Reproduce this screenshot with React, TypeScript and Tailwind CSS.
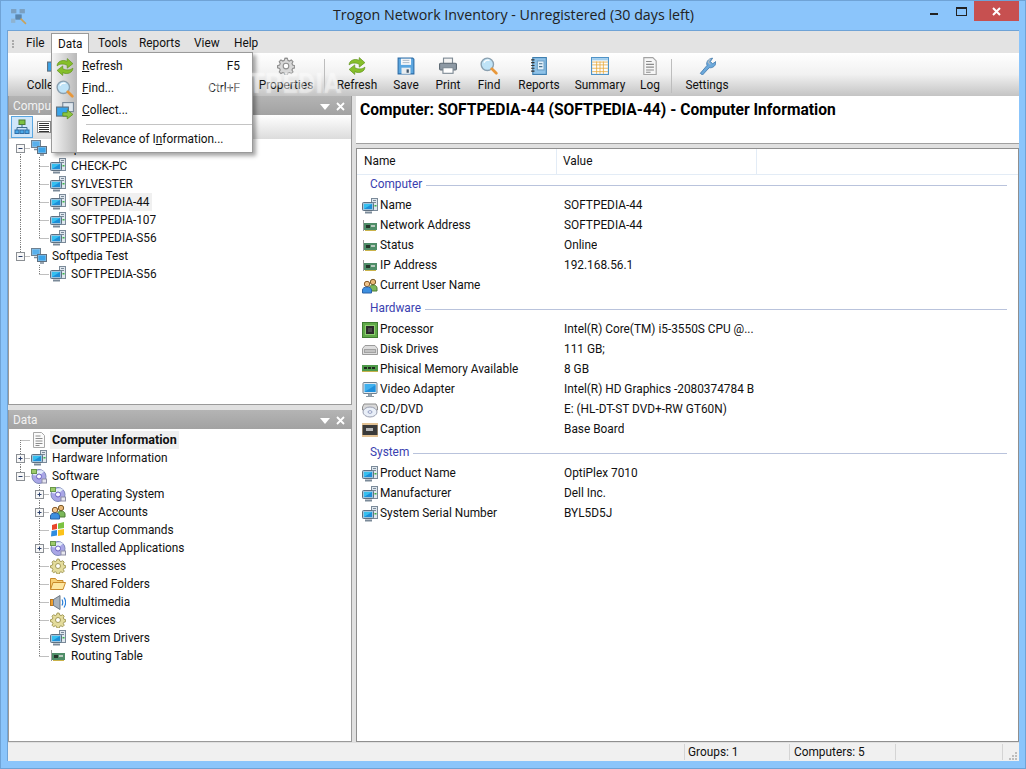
import type { ReactNode } from 'react'

const Svg = ({ size = 16, children }: { size?: number; children: ReactNode }) => (
  <svg width={size} height={size} viewBox="0 0 16 16" className="shrink-0">
    {children}
  </svg>
)

const Computer = () => (
  <Svg>
    <rect x="9.500" y="0.500" width="6" height="12" fill="#dfe7ee" stroke="#7b8a99" />
    <path d="M11 2.500h3M11 4.500h3" stroke="#7b8a99" />
    <rect x="12.500" y="7" width="2" height="1.500" fill="#39b54a" />
    <rect x="0.500" y="4.500" width="11" height="8" rx="1" fill="#9fc4de" stroke="#5f7080" />
    <rect x="2" y="6" width="8" height="5" fill="#35c0f0" />
    <path d="M2 11l8-5v5z" fill="#1d8fd8" />
    <path d="M3 14.500h7" stroke="#7b8a99" strokeWidth="2" />
  </Svg>
)

const Group = () => (
  <Svg>
    <rect x="0.500" y="0.500" width="9" height="7" fill="#9cc6e6" stroke="#6f8191" />
    <rect x="1.500" y="1.500" width="7" height="5" fill="#58b0ec" />
    <path d="M3 9.500h4" stroke="#7b8a99" strokeWidth="1.500" />
    <rect x="6.500" y="6.500" width="9" height="7" fill="#9cc6e6" stroke="#5f7080" />
    <rect x="7.500" y="7.500" width="7" height="5" fill="#3aa4ea" />
    <path d="M9 15h4" stroke="#7b8a99" strokeWidth="1.500" />
  </Svg>
)

const Doc = () => (
  <Svg>
    <path d="M2.500 0.500h8l3 3v12h-11z" fill="#fbfbfb" stroke="#a8a8a8" />
    <path d="M4.500 4h5M4.500 6.500h7M4.500 9h7M4.500 11.500h7M4.500 13.500h4" stroke="#8c8c8c" />
  </Svg>
)

const Disc = () => (
  <Svg>
    <circle cx="8" cy="8.500" r="7" fill="#a9a6e6" stroke="#7c88b8" />
    <path d="M1.500 7C4 2 10 1 13 3.500L8 8z" fill="#e3ecfa" />
    <circle cx="8" cy="8.500" r="2.500" fill="#f4f4ff" stroke="#6a60c0" />
    <rect x="0.500" y="1.500" width="5" height="4" fill="#9ccb6a" stroke="#68964a" />
    <rect x="11" y="11" width="4.500" height="4" fill="#e7e7ef" stroke="#8d8da6" />
  </Svg>
)

const Users = () => (
  <Svg>
    <circle cx="11" cy="4" r="2.700" fill="#e8b878" stroke="#7a5a2a" />
    <path d="M7.500 13v-3c0-2 1.500-3 3.500-3s4 1 4 3v3z" fill="#7cb85a" stroke="#4d7d35" />
    <circle cx="5" cy="6" r="2.700" fill="#f0c58c" stroke="#8a5a2a" />
    <path d="M0.500 15v-3c0-2 2-3 4.500-3s4.500 1 4.500 3v3z" fill="#3d8fe0" stroke="#2a62a8" />
  </Svg>
)

const Flag = () => (
  <Svg>
    <path d="M2 3l5-1.500V7l-5 1z" fill="#e8462a" />
    <path d="M8 1.500L14 0v6L8 7z" fill="#7cc242" />
    <path d="M1.500 9l5.500-1v5.500l-6 1z" fill="#2f8de0" />
    <path d="M8 8l6-1v6l-6 1z" fill="#fbc21a" />
  </Svg>
)

const Gear = ({ color = '#e4dc9c', line = '#a39a58', size = 16 }: { color?: string; line?: string; size?: number }) => (
  <Svg size={size}>
    <path
      d="M8 1.500l1.200 0.200 0.500 1.800 1.300 0.600 1.700-0.900 1.500 1.500-0.900 1.700 0.600 1.300 1.800 0.500v2l-1.800 0.500-0.600 1.300 0.900 1.700-1.500 1.500-1.700-0.900-1.300 0.500-0.500 1.800H7l-0.500-1.800-1.300-0.500-1.700 0.900-1.500-1.500 0.900-1.700-0.600-1.300-1.800-0.500v-2l1.800-0.500 0.600-1.300-0.900-1.700 1.500-1.500 1.700 0.900 1.300-0.600L7 1.700z"
      fill={color}
      stroke={line}
      transform="translate(0 -0.500)"
    />
    <circle cx="8" cy="8" r="2.500" fill="#fff" stroke={line} />
  </Svg>
)

const Folder = () => (
  <Svg>
    <path d="M0.500 13.500v-11h5l1.500 2h6v2" fill="#f6cf73" stroke="#c98a2a" />
    <path d="M0.500 13.500l2.500-7h12.500l-2.500 7z" fill="#fde6a0" stroke="#c98a2a" />
  </Svg>
)

const Speaker = () => (
  <Svg>
    <rect x="0.500" y="5.500" width="3" height="6" fill="#f0a030" stroke="#b87820" />
    <path d="M3.500 5.500L10 1.500v14L3.500 11.500z" fill="#aab4be" stroke="#6d7884" />
    <path d="M12 5.500c1 2 1 4 0 6M14 3.500c2 3 2 7 0 10" fill="none" stroke="#2b7fd8" strokeWidth="1.200" />
  </Svg>
)

const Nic = () => (
  <Svg>
    <path d="M1.500 2v11" stroke="#9a9a9a" />
    <rect x="2" y="5" width="13" height="7" fill="#4f8d68" />
    <rect x="4" y="7" width="4" height="3" fill="#23352a" />
    <rect x="9" y="7" width="4" height="2" fill="#b6c9bd" />
    <path d="M3 12.500h11" stroke="#c9b24a" />
  </Svg>
)

const Chip = () => (
  <Svg>
    <rect x="0.500" y="0.500" width="15" height="15" fill="#5fa948" stroke="#3e7d30" />
    <rect x="3.500" y="3.500" width="9" height="9" fill="#2b2b2b" stroke="#8fcf72" />
    <rect x="6" y="6" width="4" height="4" fill="#4a4a4a" />
  </Svg>
)

const DiskDrive = () => (
  <Svg>
    <path d="M3 3.500h10l2.500 3v6h-15v-6z" fill="#dcdcdc" stroke="#9b9b9b" />
    <rect x="2.500" y="7.500" width="11" height="3" fill="#c2c2c2" stroke="#a2a2a2" />
  </Svg>
)

const Ram = () => (
  <Svg>
    <rect x="0" y="3" width="16" height="6" fill="#4f9a4a" />
    <path d="M2 5h3v2H2zM6 5h3v2H6zM10 5h3v2h-3z" fill="#1e2a1e" />
    <path d="M0 9.500h16" stroke="#c5b24c" />
  </Svg>
)

const Monitor = () => (
  <Svg>
    <rect x="1" y="0.500" width="14" height="11" rx="1" fill="#dce6ee" stroke="#6d7f8f" />
    <rect x="2.500" y="2" width="11" height="8" fill="#3fb0ee" />
    <path d="M2.500 10L13.500 3v7z" fill="#1f90dc" />
    <path d="M6.500 12h3v2h-3zM4 14.500h8" fill="#a9b6c1" stroke="#8a98a4" />
  </Svg>
)

const Cd = () => (
  <Svg>
    <path d="M2 2h12l1.500 3v3h-15V5z" fill="#d9d9d9" stroke="#8e8e8e" />
    <ellipse cx="8" cy="10" rx="7" ry="5" fill="#e9eff8" stroke="#9a9fb0" />
    <ellipse cx="8" cy="10" rx="2" ry="1.300" fill="#fff" stroke="#8f9ac0" />
  </Svg>
)

const Caption = () => (
  <Svg>
    <path d="M1 1v14M3 1v14M5 1v14M7 1v14M9 1v14M11 1v14M13 1v14M15 1v14" stroke="#c8862a" />
    <rect x="0.500" y="3" width="15" height="10" fill="#3a3a3a" />
    <rect x="4" y="6" width="7" height="3" fill="#b9b9b9" />
  </Svg>
)

const Refresh = ({ size = 16 }: { size?: number }) => (
  <Svg size={size}>
    <path d="M1 7c0-4 5-6 9-4V0.500l5 4.500-5 4V6.500C7 5 3.500 5 1 7z" fill="#86bf2a" stroke="#5d8f18" strokeWidth="0.600" />
    <path d="M15 9c0 4-5 6-9 4v2.500L1 11l5-4v2.500C9 11 12.500 11 15 9z" fill="#86bf2a" stroke="#5d8f18" strokeWidth="0.600" />
  </Svg>
)

const Find = ({ size = 16 }: { size?: number }) => (
  <Svg size={size}>
    <circle cx="6.500" cy="6.500" r="5.500" fill="#bfe3f7" stroke="#8aa0b0" strokeWidth="1.200" />
    <path d="M3.500 5c1-2 3-2.500 5-2" stroke="#fff" fill="none" />
    <path d="M10.500 10.500l4 4" stroke="#e8973a" strokeWidth="2.400" strokeLinecap="round" />
  </Svg>
)

const Collect = ({ size = 16 }: { size?: number }) => (
  <Svg size={size}>
    <rect x="6" y="0.500" width="9.500" height="8" fill="#dfe7ee" stroke="#7b8a99" />
    <rect x="0.500" y="4.500" width="10.500" height="8" fill="#3aa4ea" stroke="#5f7080" />
    <path d="M6 9.500h4V7l5 4-5 4v-2.500H6z" fill="#8cc63f" stroke="#5d8f18" strokeWidth="0.700" />
  </Svg>
)

const Save = () => (
  <Svg size={18}>
    <path d="M1 1h13l1 1v13H1z" fill="#5aa6e0" stroke="#2f6ea8" />
    <rect x="3.500" y="1.500" width="9" height="5.500" fill="#f6f8fa" />
    <path d="M5 3h6M5 5h6" stroke="#9aaab8" strokeWidth="0.700" />
    <rect x="4" y="9.500" width="8" height="5.500" fill="#e9edf0" />
    <rect x="8.500" y="11" width="2" height="3" fill="#40566a" />
  </Svg>
)

const Print = () => (
  <Svg size={18}>
    <rect x="4" y="1" width="8" height="5" fill="#f3f3f3" stroke="#7e8a94" />
    <rect x="0.500" y="5.500" width="15" height="6" rx="1" fill="#8d99a4" stroke="#5f6b75" />
    <rect x="3.500" y="9.500" width="9" height="5" fill="#fff" stroke="#7e8a94" />
  </Svg>
)

const Reports = () => (
  <Svg size={18}>
    <rect x="2.500" y="0.500" width="12" height="15" fill="#8ec2e8" stroke="#3f7fb0" />
    <path d="M1 2.500h3M1 5h3M1 7.500h3M1 10h3M1 12.500h3" stroke="#333" />
    <rect x="6.500" y="3.500" width="6" height="8" fill="#e4f1fa" stroke="#6ea2c8" />
    <path d="M8 6h3M8 8.500h3" stroke="#44708f" />
  </Svg>
)

const Summary = () => (
  <Svg size={18}>
    <rect x="0.500" y="0.500" width="15" height="15" fill="#fdfdfd" stroke="#4f93c8" />
    <path d="M1 4.500h14M1 7h14M1 10h14M1 13h14M5 4v11M8 4v11M11 4v11" stroke="#e8a83a" strokeWidth="0.700" />
    <rect x="1" y="1" width="14" height="2" fill="#9fcdee" />
  </Svg>
)

const LogIcon = () => (
  <Svg size={18}>
    <path d="M2.500 0.500h8l3 3v12h-11z" fill="#f6f6f6" stroke="#a3a3a3" />
    <path d="M4.500 4h5M4.500 6.500h7M4.500 9h7M4.500 11.500h7M4.500 13.500h4" stroke="#8a8a8a" />
  </Svg>
)

const Wrench = () => (
  <Svg size={18}>
    <path d="M2 14.500l6-7c-1-3 1-6 5-6.500l-2 3 2 2 3-2c0 4-3 6-6 5.500l-6 6.500z" fill="#6ca9dc" stroke="#3e76a8" strokeWidth="0.700" />
    <path d="M11 1.500l-2 3 2 2" fill="none" stroke="#b5bdc4" />
  </Svg>
)

const TreeToggle = () => (
  <Svg>
    <rect x="5" y="1" width="6" height="4.500" fill="#7cc242" stroke="#4d7d35" />
    <path d="M8 5.500V9M3 11V8.500h10V11" fill="none" stroke="#3d6d8f" />
    <rect x="1" y="11" width="4" height="3.500" fill="#4aa8e8" stroke="#2f6ea8" />
    <rect x="6" y="11" width="4" height="3.500" fill="#4aa8e8" stroke="#2f6ea8" />
    <rect x="11" y="11" width="4" height="3.500" fill="#4aa8e8" stroke="#2f6ea8" />
  </Svg>
)

const ListToggle = () => (
  <Svg>
    <rect x="1.500" y="2.500" width="13" height="11" fill="#fff" stroke="#8a8a8a" />
    <path d="M3 4.500h10M3 6.500h10M3 8.500h10M3 10.500h10M3 12.500h10" stroke="#333" />
  </Svg>
)

// one 19px column of tree lines, with the +/- box when the node has children
function TreeCell({ up, down, right, box }: { up?: boolean; down?: boolean; right?: boolean; box?: 'plus' | 'minus' }) {
  return (
    <svg width="19" height="18" viewBox="0 0 19 18" className="shrink-0">
      {up && <path d="M9.500 0V9" stroke="#7f7f7f" strokeDasharray="1 1" />}
      {down && <path d="M9.500 9V18" stroke="#7f7f7f" strokeDasharray="1 1" />}
      {right && <path d="M9.500 9.500H19" stroke="#7f7f7f" strokeDasharray="1 1" />}
      {box && (
        <>
          <rect x="5.500" y="5.500" width="8" height="8" fill="#f7f7f7" stroke="#8b8f94" />
          <path d="M7.500 9.500h4" stroke="#2a3f6a" />
          {box === 'plus' && <path d="M9.500 7.500v4" stroke="#2a3f6a" />}
        </>
      )}
    </svg>
  )
}

interface TreeNode {
  cells: { up?: boolean; down?: boolean; right?: boolean; box?: 'plus' | 'minus' }[]
  icon: ReactNode
  label: string
  bold?: boolean
  selected?: boolean
}

const V = { up: true, down: true }
const MID = { up: true, down: true, right: true }
const END = { up: true, right: true }

const computerTree: TreeNode[] = [
  { cells: [{ down: true, right: true, box: 'minus' }], icon: <Group />, label: 'Softpedia' },
  { cells: [V, MID], icon: <Computer />, label: 'CHECK-PC' },
  { cells: [V, MID], icon: <Computer />, label: 'SYLVESTER' },
  { cells: [V, MID], icon: <Computer />, label: 'SOFTPEDIA-44', selected: true },
  { cells: [V, MID], icon: <Computer />, label: 'SOFTPEDIA-107' },
  { cells: [V, END], icon: <Computer />, label: 'SOFTPEDIA-S56' },
  { cells: [{ up: true, right: true, box: 'minus' }], icon: <Group />, label: 'Softpedia Test' },
  { cells: [{}, END], icon: <Computer />, label: 'SOFTPEDIA-S56' },
]

const dataTree: TreeNode[] = [
  { cells: [{ down: true, right: true }], icon: <Doc />, label: 'Computer Information', bold: true, selected: true },
  { cells: [{ up: true, down: true, right: true, box: 'plus' }], icon: <Computer />, label: 'Hardware Information' },
  { cells: [{ up: true, right: true, box: 'minus' }], icon: <Disc />, label: 'Software' },
  { cells: [{}, { ...MID, box: 'plus' }], icon: <Disc />, label: 'Operating System' },
  { cells: [{}, { ...MID, box: 'plus' }], icon: <Users />, label: 'User Accounts' },
  { cells: [{}, MID], icon: <Flag />, label: 'Startup Commands' },
  { cells: [{}, { ...MID, box: 'plus' }], icon: <Disc />, label: 'Installed Applications' },
  { cells: [{}, MID], icon: <Gear />, label: 'Processes' },
  { cells: [{}, MID], icon: <Folder />, label: 'Shared Folders' },
  { cells: [{}, MID], icon: <Speaker />, label: 'Multimedia' },
  { cells: [{}, MID], icon: <Gear />, label: 'Services' },
  { cells: [{}, MID], icon: <Computer />, label: 'System Drivers' },
  { cells: [{}, END], icon: <Nic />, label: 'Routing Table' },
]

function Tree({ nodes, className }: { nodes: TreeNode[]; className: string }) {
  return (
    <div className={`pl-[2px] ${className}`}>
      {nodes.map((n, i) => (
        <div key={i} className="flex h-[18px] items-center">
          {n.cells.map((c, j) => (
            <TreeCell key={j} {...c} />
          ))}
          <span className="ml-px mr-[3px]">{n.icon}</span>
          <span className={`px-[2px] h-[18px] leading-[18px] ${n.selected ? 'bg-[#f0f0f0]' : ''} ${n.bold ? 'text-[12.5px] font-bold' : ''}`}>
            {n.label}
          </span>
        </div>
      ))}
    </div>
  )
}

function PanelHeader({ title }: { title: string }) {
  return (
    <div className="flex h-[19px] shrink-0 items-center justify-between bg-gradient-to-b from-[#b4b4b4] to-[#a2a2a2] pl-[4px] pr-[6px] pt-[2px] text-[#f2f2f2]">
      <span>{title}</span>
      <div className="flex items-center gap-[6px]">
        <svg width="10" height="6" viewBox="0 0 10 6">
          <path d="M0 0h10L5 6z" fill="#fff" />
        </svg>
        <svg width="9" height="9" viewBox="0 0 9 9">
          <path d="M1 1l7 7M8 1L1 8" stroke="#fff" strokeWidth="1.800" />
        </svg>
      </div>
    </div>
  )
}

function ToolButton({ width, icon, label }: { width: string; icon: ReactNode; label: string }) {
  return (
    <div className={`flex shrink-0 flex-col items-center ${width}`}>
      <div className="flex h-[22px] items-center">{icon}</div>
      <span className="mt-[1px] whitespace-nowrap leading-[15px]">{label}</span>
    </div>
  )
}

const ToolSep = () => <div className="mx-[8px] mt-[4px] h-[34px] w-px shrink-0 bg-[#bdbdbd]" />

interface InfoRow {
  icon: ReactNode
  name: string
  value?: string
}

const sections: { title: string; rows: InfoRow[] }[] = [
  {
    title: 'Computer',
    rows: [
      { icon: <Computer />, name: 'Name', value: 'SOFTPEDIA-44' },
      { icon: <Nic />, name: 'Network Address', value: 'SOFTPEDIA-44' },
      { icon: <Nic />, name: 'Status', value: 'Online' },
      { icon: <Nic />, name: 'IP Address', value: '192.168.56.1' },
      { icon: <Users />, name: 'Current User Name' },
    ],
  },
  {
    title: 'Hardware',
    rows: [
      { icon: <Chip />, name: 'Processor', value: 'Intel(R) Core(TM) i5-3550S CPU @...' },
      { icon: <DiskDrive />, name: 'Disk Drives', value: '111 GB;' },
      { icon: <Ram />, name: 'Phisical Memory Available', value: '8 GB' },
      { icon: <Monitor />, name: 'Video Adapter', value: 'Intel(R) HD Graphics -2080374784 B' },
      { icon: <Cd />, name: 'CD/DVD', value: 'E: (HL-DT-ST DVD+-RW GT60N)' },
      { icon: <Caption />, name: 'Caption', value: 'Base Board' },
    ],
  },
  {
    title: 'System',
    rows: [
      { icon: <Computer />, name: 'Product Name', value: 'OptiPlex 7010' },
      { icon: <Computer />, name: 'Manufacturer', value: 'Dell Inc.' },
      { icon: <Computer />, name: 'System Serial Number', value: 'BYL5D5J' },
    ],
  },
]

function MenuItem({ icon, children, shortcut }: { icon: ReactNode; children: ReactNode; shortcut?: string }) {
  return (
    <div className="flex h-[22px] items-center">
      <div className="flex w-[25px] shrink-0 justify-center">{icon}</div>
      <div className="ml-[5px] flex-1">{children}</div>
      {shortcut && <span className="mr-[12px]">{shortcut}</span>}
    </div>
  )
}

export default function App() {
  return (
    <div
      className="relative flex h-[769px] w-[1026px] flex-col overflow-hidden border border-[#6fa3d6] bg-[#8bc5fb] text-[11.85px] text-[#111]"
      style={{ fontFamily: 'Roboto, "Liberation Sans", sans-serif' }}
    >
      {/* Title bar */}
      <div className="flex h-[29px] shrink-0 items-start">
        <div className="ml-[9px] mt-[7px]">
          <svg width="17" height="17" viewBox="0 0 16 16">
            <rect x="1" y="1" width="5" height="4" fill="#7a9fc0" />
            <rect x="9" y="1" width="5" height="4" fill="#7a9fc0" />
            <rect x="5" y="6" width="6" height="5" fill="#5a86ad" />
            <rect x="1" y="10" width="4" height="4" fill="#8fb3d0" />
            <path d="M10 10l5 5" stroke="#c9a25a" strokeWidth="1.500" />
          </svg>
        </div>
        <div className="mt-[4px] flex-1 pl-[83px] pr-[13px] text-center text-[14.25px] leading-[20px] text-[#222]" style={{ fontFamily: '"Open Sans", sans-serif' }}>
          Trogon Network Inventory - Unregistered (30 days left)
        </div>
        <div className="flex items-start">
          <div className="mt-[12px] mr-[18px] h-[2px] w-[8px] bg-[#222]" />
          <div className="mt-[6px] mr-[7px] h-[9px] w-[11px] border border-t-2 border-[#222]" />
          <div className="flex h-[20px] w-[45px] items-center justify-center bg-[#c75050]">
            <svg width="9" height="9" viewBox="0 0 9 9">
              <path d="M1 1l7 7M8 1L1 8" stroke="#fff" strokeWidth="2" />
            </svg>
          </div>
          <div className="w-[6px]" />
        </div>
      </div>

      {/* Client area */}
      <div className="mx-[6px] mb-[7px] flex min-h-0 flex-1 flex-col border-l border-t border-[#6fa3d6] bg-[#e0e0e0]">
        {/* Menu bar */}
        <div className="flex h-[22px] shrink-0 items-center bg-[#e3e3e3] pl-[4px] pt-[4px]">
          <div className="mr-[6px] flex flex-col gap-[1px]">
            <div className="h-[2px] w-[2px] bg-[#aaa]" />
            <div className="h-[2px] w-[2px] bg-[#aaa]" />
            <div className="h-[2px] w-[2px] bg-[#aaa]" />
          </div>
          <span className="w-[33px] pl-[6px]">File</span>
          <span className="w-[38px] pl-[7px]">Data</span>
          <span className="w-[41px] pl-[7px]">Tools</span>
          <span className="w-[55px] pl-[7px]">Reports</span>
          <span className="w-[40px] pl-[7px]">View</span>
          <span className="pl-[7px]">Help</span>
        </div>

        {/* Toolbar */}
        <div className="flex h-[43px] shrink-0 bg-gradient-to-b from-[#ffffff] via-[#f1f1f1] to-[#c4c4c4] pt-[2px]">
          <ToolButton width="w-[64px] ml-[5px]" icon={<span className="ml-[22px] flex"><Collect size={18} /></span>} label="Collect" />
          <div className="w-[179px] shrink-0" />
          <ToolButton width="w-[60px]" icon={<Gear color="#d8d8d8" line="#8f8f8f" size={18} />} label="Properties" />
          <ToolSep />
          <ToolButton width="w-[48px]" icon={<Refresh size={18} />} label="Refresh" />
          <ToolButton width="w-[50px]" icon={<Save />} label="Save" />
          <ToolButton width="w-[34px]" icon={<Print />} label="Print" />
          <ToolButton width="w-[48px]" icon={<Find size={18} />} label="Find" />
          <ToolButton width="w-[52px]" icon={<Reports />} label="Reports" />
          <ToolButton width="w-[70px]" icon={<Summary />} label="Summary" />
          <ToolButton width="w-[30px] -mr-[2px]" icon={<LogIcon />} label="Log" />
          <ToolSep />
          <ToolButton width="w-[54px]" icon={<Wrench />} label="Settings" />
        </div>

        {/* Panels */}
        <div className="relative flex min-h-0 flex-1 gap-[4px] pb-[18px]">
          <div className="flex w-[344px] shrink-0 flex-col gap-[5px] pb-[1px]">
            <div className="flex h-[309px] flex-col border-x border-b border-[#9a9a9a]">
              <PanelHeader title="Computers" />
              <div className="flex h-[24px] shrink-0 items-center gap-[3px] bg-gradient-to-b from-[#ffffff] to-[#dcdcdc] pl-[2px]">
                <div className="flex h-[22px] w-[22px] items-center justify-center border border-[#5aa6e0] bg-[#cfe6fa]">
                  <TreeToggle />
                </div>
                <div className="flex h-[22px] w-[16px] items-center justify-center">
                  <ListToggle />
                </div>
              </div>
              <div className="min-h-0 flex-1 bg-white">
                <Tree nodes={computerTree} className="pt-0" />
              </div>
            </div>
            <div className="flex min-h-0 flex-1 flex-col border-x border-b border-[#9a9a9a]">
              <PanelHeader title="Data" />
              <div className="min-h-0 flex-1 bg-white">
                <Tree nodes={dataTree} className="pt-[2px]" />
              </div>
            </div>
          </div>

          <div className="flex min-w-0 flex-1 flex-col gap-[4px] pb-[1px]">
            <div className="h-[48px] shrink-0 border-b border-[#a0a0a0] bg-white pl-[4px] pt-[4px] text-[15.6px] font-bold leading-[20px] text-black">
              Computer: SOFTPEDIA-44 (SOFTPEDIA-44) - Computer Information
            </div>
            <div className="min-h-0 flex-1 border border-[#8f8f8f] bg-white">
              <div className="flex h-[26px] border-b border-[#e3ecf6] pl-[7px] leading-[25px]">
                <div className="w-[193px] border-r border-[#e3ecf6]">Name</div>
                <div className="w-[200px] border-r border-[#e3ecf6] pl-[6px]">Value</div>
              </div>
              {sections.map((s, i) => (
                <div key={s.title} className={i === 0 ? '' : 'mt-[3px]'}>
                  <div className="mb-px flex h-[20px] items-center pl-[13px] pr-[11px] text-[#3a3fb0]">
                    <span>{s.title}</span>
                    <div className="ml-[4px] h-px flex-1 bg-[#b9c3dc]" />
                  </div>
                  {s.rows.map((r) => (
                    <div key={r.name} className="flex h-[20px] items-center pl-[5px]">
                      <div className="w-[18px] shrink-0">{r.icon}</div>
                      <div className="w-[184px] shrink-0 truncate">{r.name}</div>
                      <div className="truncate">{r.value}</div>
                    </div>
                  ))}
                </div>
              ))}
            </div>
          </div>

          {/* Status bar */}
          <div className="absolute inset-x-0 bottom-0 flex h-[18px] items-center justify-end bg-[#f0f0f0]">
            <div className="h-[16px] w-[105px] border-l border-[#d4d4d4] pl-[3px] leading-[16px]">Groups: 1</div>
            <div className="h-[16px] w-[106px] border-l border-[#d4d4d4] pl-[4px] leading-[16px]">Computers: 5</div>
            <div className="h-[16px] w-[107px] border-l border-[#d4d4d4]" />
            <div className="flex h-[16px] w-[17px] items-end justify-end border-l border-[#d4d4d4] pr-[2px]">
              <svg width="9" height="9" viewBox="0 0 9 9">
                <path d="M7 1h2v2H7zM4 4h2v2H4zM7 4h2v2H7zM1 7h2v2H1zM4 7h2v2H4zM7 7h2v2H7z" fill="#bdbdbd" />
              </svg>
            </div>
          </div>
        </div>
      </div>

      {/* Open Data menu */}
      <div className="absolute left-[50px] top-[32px] z-10 h-[20px] w-[38px] border border-b-0 border-[#9a9a9a] bg-white pl-[6px] leading-[20px]">Data</div>
      <div className="absolute left-[50px] top-[51px] h-[101px] w-[202px] border border-[#9a9a9a] bg-white shadow-[3px_3px_4px_rgba(0,0,0,0.35)]">
        <div className="absolute inset-y-0 left-0 w-[25px] bg-gradient-to-r from-[#f4f4f4] to-[#b9b9b9]" />
        <div className="relative pt-[3px]">
          <MenuItem icon={<Refresh size={18} />} shortcut="F5">
            <u>R</u>efresh
          </MenuItem>
          <MenuItem icon={<Find size={18} />} shortcut="Ctrl+F">
            <u>F</u>ind...
          </MenuItem>
          <MenuItem icon={<Collect size={18} />}>
            <u>C</u>ollect...
          </MenuItem>
          <div className="ml-[34px] mt-[2px] h-px bg-[#c4c4c4]" />
          <div className="ml-[30px] mt-[4px] leading-[20px]">
            Relevance of I<u>n</u>formation...
          </div>
        </div>
      </div>

      {/* Watermark */}
      <div className="pointer-events-none absolute left-[197px] top-[68px] z-20 text-[27px] font-bold leading-[30px] text-white/30 [text-shadow:0_0_3px_rgba(255,255,255,0.4)]">
        SOFTPEDIA
      </div>
    </div>
  )
}
